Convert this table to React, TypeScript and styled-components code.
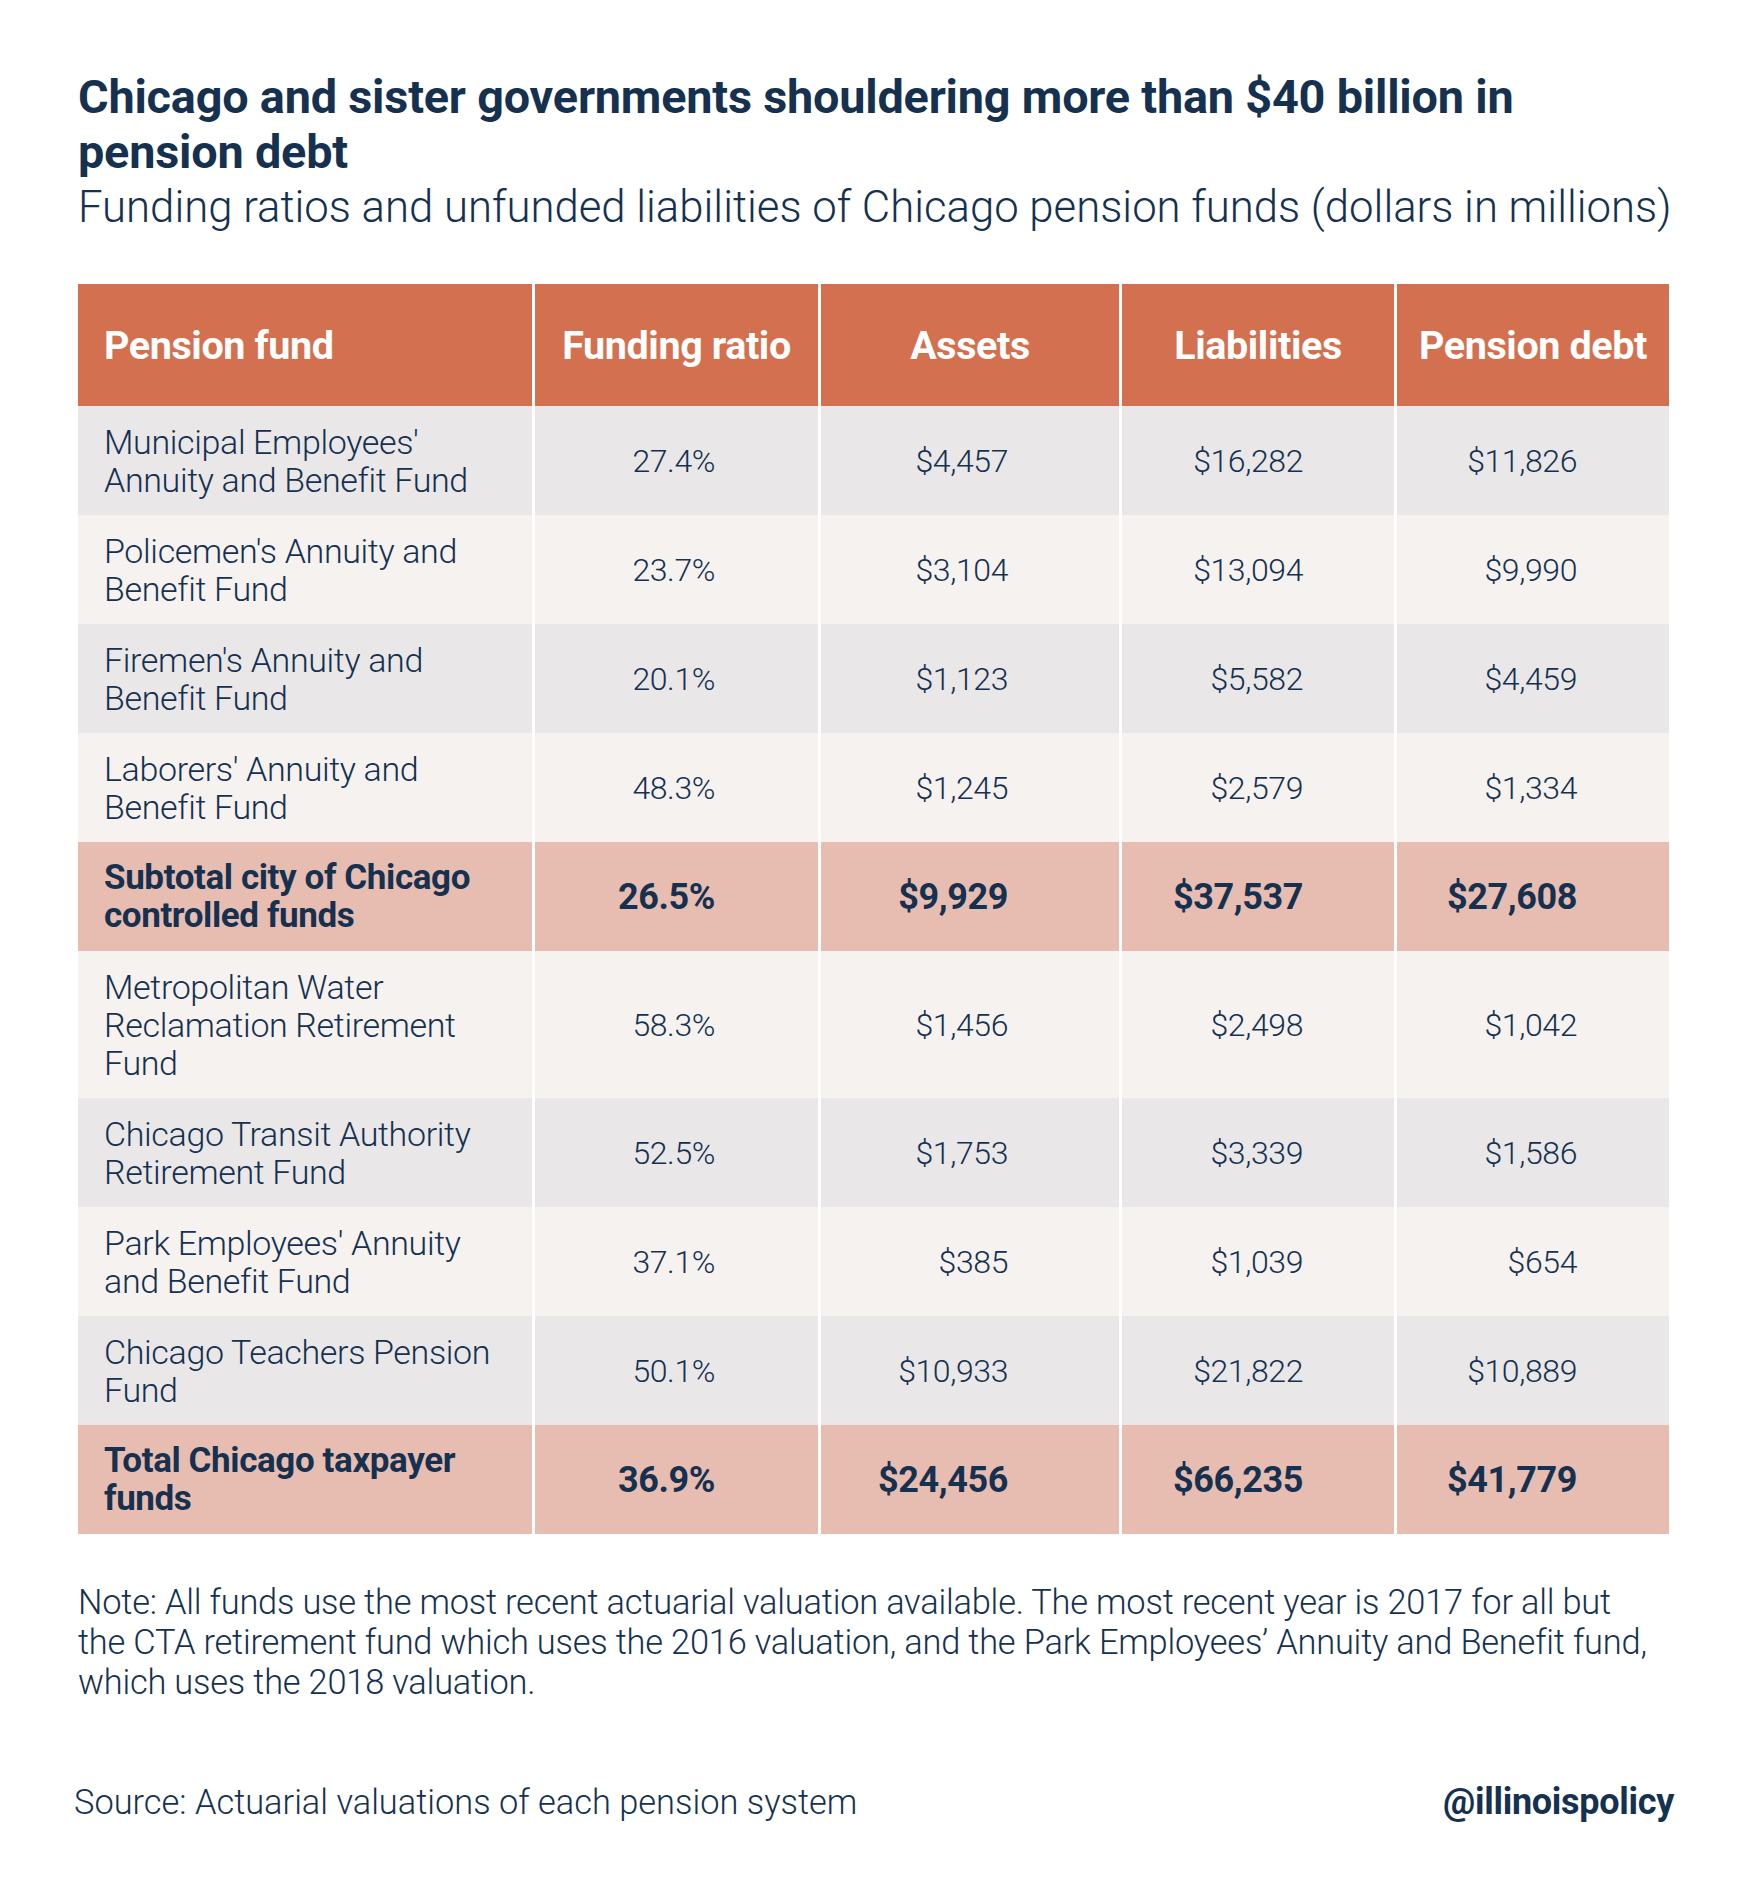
import React from "react";
import styled, { createGlobalStyle } from "styled-components";

const GlobalStyle = createGlobalStyle`
  html, body { margin: 0; padding: 0; background: #ffffff; }
  body { font-family: Roboto, "Noto Sans", "Liberation Sans", sans-serif; color: #163150; }
`;

const Page = styled.div`
  width: 1752px;
  min-height: 1902px;
  box-sizing: border-box;
  padding: 70px 83px 0 78px;
  background: #ffffff;
`;

const Title = styled.h1`
  margin: 0;
  font-family: Roboto, "Liberation Sans", sans-serif;
  font-weight: 700;
  font-size: 46.8px;
  line-height: 55px;
  letter-spacing: -0.2px;
  color: #163150;
  white-space: nowrap;
`;

const Subtitle = styled.p`
  margin: 2px 0 0 0;
  font-family: Roboto, "Liberation Sans", sans-serif;
  font-weight: 300;
  font-size: 43.7px;
  line-height: 50px;
  color: #163150;
  white-space: nowrap;
`;

const Table = styled.div`
  margin-top: 52px;
  width: 1591px;
  display: grid;
  grid-template-columns: 454px 283px 298px 272px 1fr;
  column-gap: 3px;
  background: #ffffff;
`;

type Tone = "head" | "grey" | "light" | "pink";

const toneBg: Record<Tone, string> = {
  head: "#D3704F",
  grey: "#E9E7E8",
  light: "#F5F2EF",
  pink: "#E8BDB1",
};

const HeadCell = styled.div<{ $first?: boolean }>`
  background: ${toneBg.head};
  height: 122px;
  display: flex;
  align-items: center;
  justify-content: ${(p) => (p.$first ? "flex-start" : "center")};
  padding-left: ${(p) => (p.$first ? "26px" : "0")};
  color: #ffffff;
  font-weight: 700;
  font-size: 39.5px;
  letter-spacing: -0.4px;
`;

const NameCell = styled.div<{ $tone: Tone; $bold?: boolean; $tall?: boolean }>`
  background: ${(p) => toneBg[p.$tone]};
  height: ${(p) => (p.$tall ? "147px" : "109px")};
  box-sizing: border-box;
  display: flex;
  align-items: center;
  padding: 0 10px 0 26px;
  font-size: ${(p) => (p.$bold ? "35px" : "34px")};
  line-height: 38px;
  font-weight: ${(p) => (p.$bold ? 700 : 300)};
  letter-spacing: ${(p) => (p.$bold ? "-0.4px" : "-0.35px")};
  color: #163150;
  white-space: nowrap;
`;

const ValueCell = styled.div<{ $tone: Tone; $bold?: boolean; $tall?: boolean; $pad: number }>`
  background: ${(p) => toneBg[p.$tone]};
  height: ${(p) => (p.$tall ? "147px" : "109px")};
  box-sizing: border-box;
  display: flex;
  align-items: center;
  justify-content: flex-end;
  padding-right: ${(p) => p.$pad}px;
  font-size: ${(p) => (p.$bold ? "36px" : "32px")};
  font-weight: ${(p) => (p.$bold ? 700 : 300)};
  letter-spacing: ${(p) => (p.$bold ? "-0.4px" : "-0.4px")};
  color: #163150;
`;

const Note = styled.p`
  margin: 48px 0 0 0;
  font-size: 34.4px;
  line-height: 40px;
  font-weight: 300;
  color: #163150;
  letter-spacing: -0.2px;
  white-space: nowrap;
`;

const Footer = styled.div`
  margin-top: 80px;
  width: 1596px;
  display: flex;
  justify-content: space-between;
  align-items: center;
  line-height: 40px;
  color: #163150;
`;

const Source = styled.span`
  font-size: 34.4px;
  font-weight: 300;
  margin-left: -4px;
`;

const Handle = styled.span`
  font-size: 36px;
  font-weight: 700;
  letter-spacing: -0.3px;
`;

type Row = {
  name: string[];
  vals: string[];
  tone: Tone;
  bold?: boolean;
  tall?: boolean;
};

const rows: Row[] = [
  { name: ["Municipal Employees'", "Annuity and Benefit Fund"], vals: ["27.4%", "$4,457", "$16,282", "$11,826"], tone: "grey" },
  { name: ["Policemen's Annuity and", "Benefit Fund"], vals: ["23.7%", "$3,104", "$13,094", "$9,990"], tone: "light" },
  { name: ["Firemen's Annuity and", "Benefit Fund"], vals: ["20.1%", "$1,123", "$5,582", "$4,459"], tone: "grey" },
  { name: ["Laborers' Annuity and", "Benefit Fund"], vals: ["48.3%", "$1,245", "$2,579", "$1,334"], tone: "light" },
  { name: ["Subtotal city of Chicago", "controlled funds"], vals: ["26.5%", "$9,929", "$37,537", "$27,608"], tone: "pink", bold: true },
  { name: ["Metropolitan Water", "Reclamation Retirement", "Fund"], vals: ["58.3%", "$1,456", "$2,498", "$1,042"], tone: "light", tall: true },
  { name: ["Chicago Transit Authority", "Retirement Fund"], vals: ["52.5%", "$1,753", "$3,339", "$1,586"], tone: "grey" },
  { name: ["Park Employees' Annuity", "and Benefit Fund"], vals: ["37.1%", "$385", "$1,039", "$654"], tone: "light" },
  { name: ["Chicago Teachers Pension", "Fund"], vals: ["50.1%", "$10,933", "$21,822", "$10,889"], tone: "grey" },
  { name: ["Total Chicago taxpayer", "funds"], vals: ["36.9%", "$24,456", "$66,235", "$41,779"], tone: "pink", bold: true },
];

const pads = [103, 111, 91, 92];
const headers = ["Pension fund", "Funding ratio", "Assets", "Liabilities", "Pension debt"];

export default function App() {
  return (
    <>
      <GlobalStyle />
      <Page>
        <Title>
          Chicago and sister governments shouldering more than $40 billion in
          <br />
          pension debt
        </Title>
        <Subtitle>Funding ratios and unfunded liabilities of Chicago pension funds (dollars in millions)</Subtitle>
        <Table>
          {headers.map((h, i) => (
            <HeadCell key={h} $first={i === 0}>{h}</HeadCell>
          ))}
          {rows.map((r) => (
            <React.Fragment key={r.name.join(" ")}>
              <NameCell $tone={r.tone} $bold={r.bold} $tall={r.tall}>
                <span>
                  {r.name.map((line, i) => (
                    <React.Fragment key={line}>
                      {i > 0 && <br />}
                      {line}
                    </React.Fragment>
                  ))}
                </span>
              </NameCell>
              {r.vals.map((v, i) => (
                <ValueCell key={i} $tone={r.tone} $bold={r.bold} $tall={r.tall} $pad={pads[i]}>
                  {v}
                </ValueCell>
              ))}
            </React.Fragment>
          ))}
        </Table>
        <Note>
          Note: All funds use the most recent actuarial valuation available. The most recent year is 2017 for all but
          <br />
          the CTA retirement fund which uses the 2016 valuation, and the Park Employees’ Annuity and Benefit fund,
          <br />
          which uses the 2018 valuation.
        </Note>
        <Footer>
          <Source>Source: Actuarial valuations of each pension system</Source>
          <Handle>@illinoispolicy</Handle>
        </Footer>
      </Page>
    </>
  );
}
